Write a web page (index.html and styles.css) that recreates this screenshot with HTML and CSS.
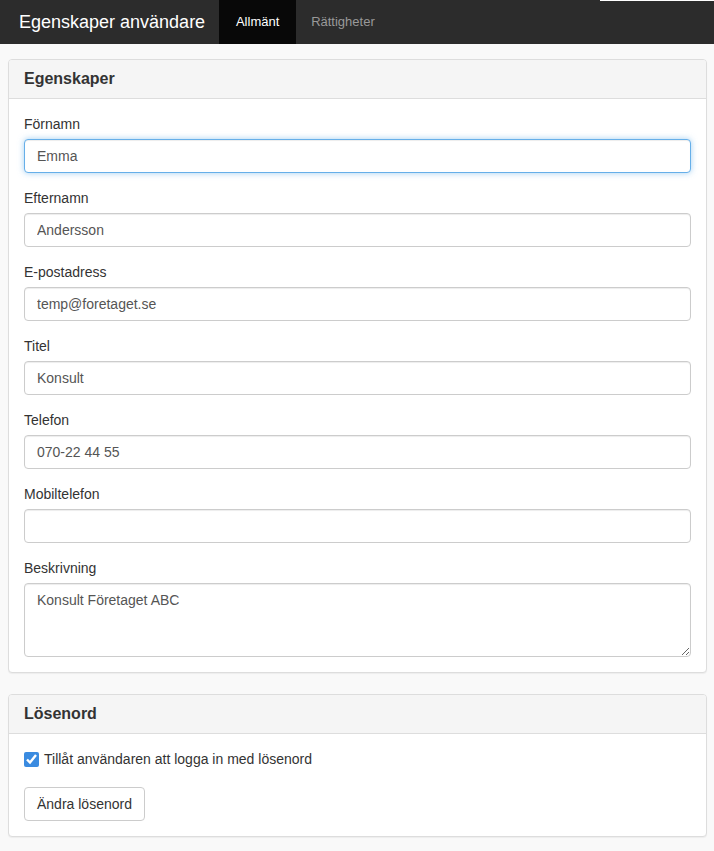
FILE: index.html
```html
<!DOCTYPE html>
<html lang="sv">
<head>
  <meta charset="UTF-8">
  <meta name="viewport" content="width=device-width, initial-scale=1.0">
  <title>Egenskaper användare</title>
  <link rel="stylesheet" href="styles.css">
</head>
<body>

  <!-- Top navigation -->
  <nav class="navbar">
    <span class="brand">Egenskaper användare</span>
    <ul class="nav-tabs">
      <li class="active"><a href="#">Allmänt</a></li>
      <li><a href="#">Rättigheter</a></li>
    </ul>
    <div class="menu-edge"></div>
  </nav>

  <div class="page">

    <!-- Egenskaper -->
    <div class="panel">
      <div class="panel-heading">
        <h3>Egenskaper</h3>
      </div>
      <div class="panel-body">
        <div class="form-group">
          <label for="firstName">Förnamn</label>
          <input id="firstName" class="form-control focused" value="Emma" autofocus>
        </div>
        <div class="form-group">
          <label for="lastName">Efternamn</label>
          <input id="lastName" class="form-control" value="Andersson">
        </div>
        <div class="form-group">
          <label for="email">E-postadress</label>
          <input id="email" class="form-control" value="temp@foretaget.se">
        </div>
        <div class="form-group">
          <label for="title">Titel</label>
          <input id="title" class="form-control" value="Konsult">
        </div>
        <div class="form-group">
          <label for="phone">Telefon</label>
          <input id="phone" class="form-control" value="070-22 44 55">
        </div>
        <div class="form-group">
          <label for="mobile">Mobiltelefon</label>
          <input id="mobile" class="form-control" value="">
        </div>
        <div class="form-group">
          <label for="description">Beskrivning</label>
          <textarea id="description" class="form-control" rows="3">Konsult Företaget ABC</textarea>
        </div>
      </div>
    </div>

    <!-- Lösenord -->
    <div class="panel">
      <div class="panel-heading">
        <h3>Lösenord</h3>
      </div>
      <div class="panel-body">
        <label class="checkbox">
          <input type="checkbox" checked>
          <span>Tillåt användaren att logga in med lösenord</span>
        </label>
        <button class="btn">Ändra lösenord</button>
      </div>
    </div>

  </div>
</body>
</html>
```

FILE: styles.css
```css
* {
  box-sizing: border-box;
}
body {
  margin: 0;
  font-family: "Liberation Sans", Arial, sans-serif;
  font-size: 14px;
  line-height: 20px;
  color: #333;
  background-color: #f9f9f9;
}
.navbar {
  position: relative;
  display: flex;
  align-items: stretch;
  height: 44px;
  background-color: #2c2c2c;
}
.brand {
  display: flex;
  align-items: center;
  padding: 0 14px 0 19px;
  font-size: 18px;
  color: #fff;
}
.nav-tabs {
  display: flex;
  margin: 0;
  padding: 0;
  list-style: none;
}
.nav-tabs li {
  display: flex;
}
.nav-tabs a {
  display: flex;
  align-items: center;
  padding: 0 15px;
  font-size: 13px;
  color: #999;
  text-decoration: none;
}
.nav-tabs .active a {
  background-color: #080808;
  color: #fff;
  width: 77px;
  justify-content: center;
  padding: 0;
}
.menu-edge {
  position: absolute;
  top: 0;
  right: 0;
  width: 114px;
  height: 1px;
  background: #fff;
}
.page {
  padding: 15px 7px 20px 8px;
}
.panel {
  background: #fff;
  border: 1px solid #ddd;
  border-radius: 4px;
  box-shadow: 0 1px 1px rgba(0, 0, 0, 0.05);
  margin-bottom: 21px;
}
.panel-heading {
  background-color: #f5f5f5;
  border-bottom: 1px solid #ddd;
  border-radius: 3px 3px 0 0;
  padding: 10px 15px;
}
.panel-heading h3 {
  margin: 0;
  font-size: 16px;
  line-height: 18px;
  font-weight: bold;
  color: #333;
}
.panel-body {
  padding: 15px;
}
.form-group {
  margin-bottom: 15px;
}
.form-group:last-child {
  margin-bottom: 0;
}
.form-group label {
  display: block;
  margin-bottom: 5px;
}
.form-control {
  display: block;
  width: 100%;
  height: 34px;
  padding: 6px 12px;
  font-family: inherit;
  font-size: 14px;
  line-height: 20px;
  color: #555;
  background: #fff;
  border: 1px solid #ccc;
  border-radius: 4px;
  box-shadow: inset 0 1px 1px rgba(0, 0, 0, 0.075);
  outline: none;
}
textarea.form-control {
  height: 74px;
  resize: vertical;
}
.form-control.focused,
.form-control:focus {
  border-color: #66afe9;
  box-shadow: inset 0 1px 1px rgba(0, 0, 0, 0.075), 0 0 6px rgba(102, 175, 233, 0.6);
}
.checkbox {
  display: flex;
  align-items: center;
  gap: 5px;
  margin-bottom: 18px;
}
.checkbox input {
  width: 15px;
  height: 15px;
  margin: 0;
  accent-color: #3a8be0;
}
.btn {
  display: block;
  height: 34px;
  padding: 6px 12px;
  font-family: inherit;
  font-size: 14px;
  line-height: 20px;
  color: #333;
  background: #fff;
  border: 1px solid #ccc;
  border-radius: 4px;
  cursor: pointer;
}
```
